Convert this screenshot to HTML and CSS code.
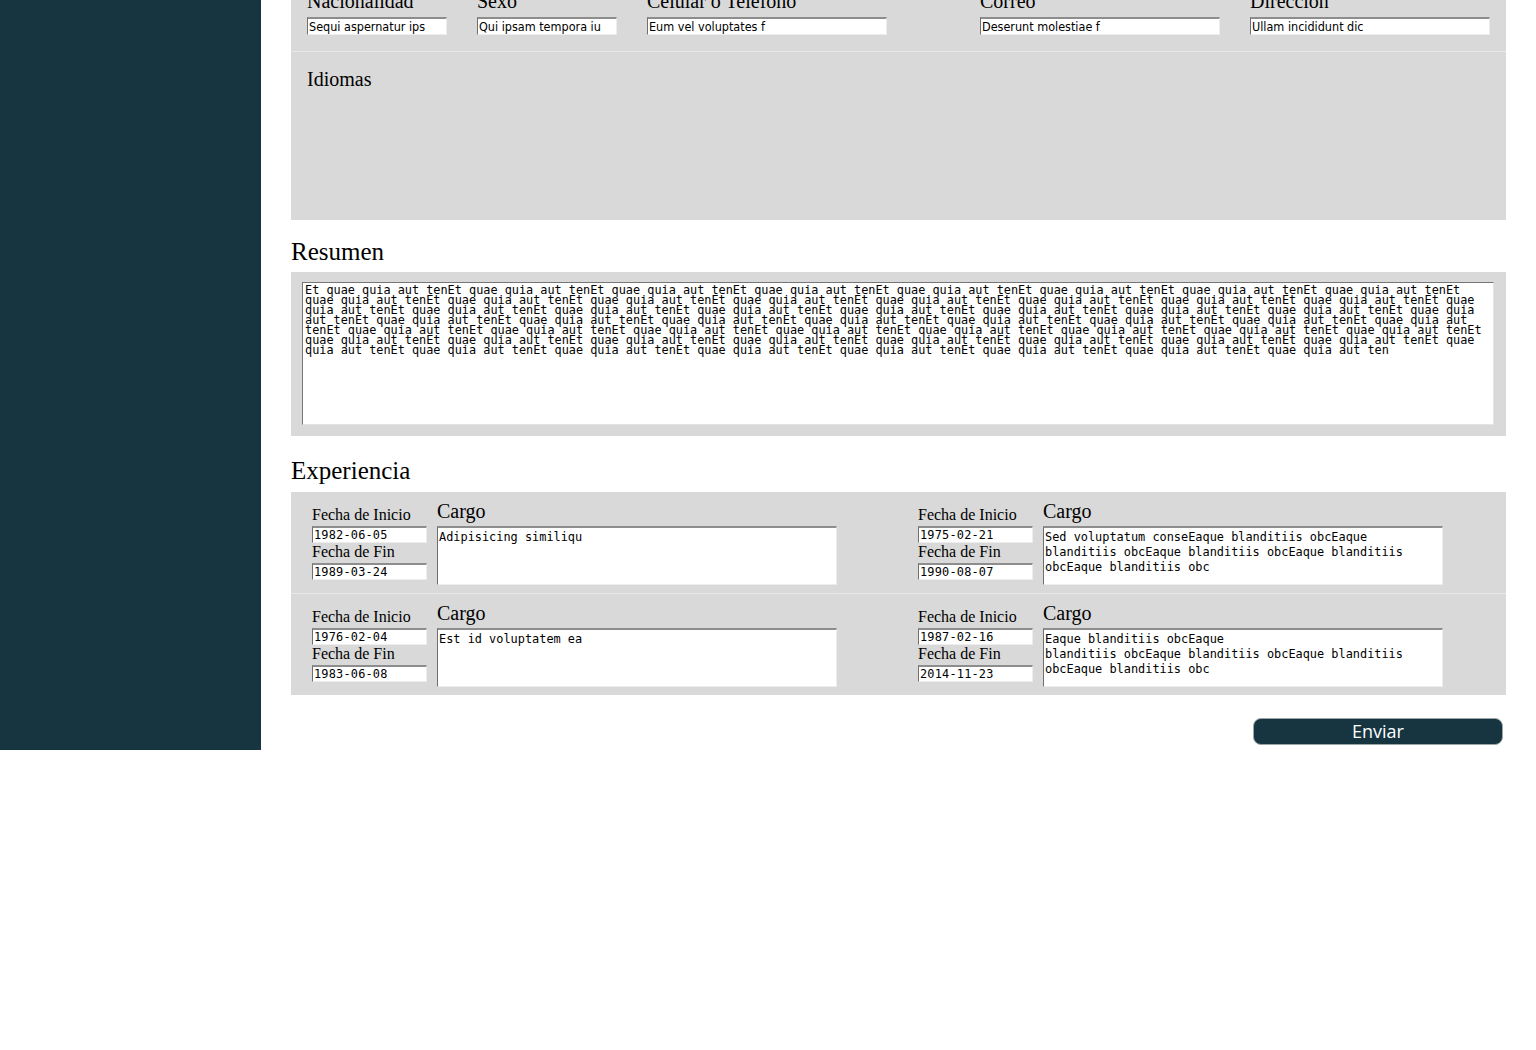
FILE: index.html
```html
<!DOCTYPE html>
<html lang="es">
<head>
<meta charset="utf-8">
<title>Formulario</title>
<link rel="stylesheet" href="styles.css">
</head>
<body>
<div class="layout">
  <aside class="sidebar"></aside>
  <main class="main">
    <section class="panel datos">
      <div class="field-row">
        <div class="group">
          <div class="field"><label class="lbl">Nacionalidad</label><input class="inp w140" type="text" value="Sequi aspernatur ips"></div>
          <div class="field"><label class="lbl">Sexo</label><input class="inp w140" type="text" value="Qui ipsam tempora iu"></div>
          <div class="field"><label class="lbl">Celular o Teléfono</label><input class="inp w240" type="text" value="Eum vel voluptates f"></div>
        </div>
        <div class="group">
          <div class="field"><label class="lbl">Correo</label><input class="inp w240" type="text" value="Deserunt molestiae f"></div>
          <div class="field"><label class="lbl">Dirección</label><input class="inp w240" type="text" value="Ullam incididunt dic"></div>
        </div>
      </div>
      <div class="idiomas">
        <label class="lbl">Idiomas</label>
      </div>
    </section>

    <h2 class="section-title">Resumen</h2>
    <section class="panel resumen">
      <textarea class="resumen-text">Et quae quia aut tenEt quae quia aut tenEt quae quia aut tenEt quae quia aut tenEt quae quia aut tenEt quae quia aut tenEt quae quia aut tenEt quae quia aut tenEt quae quia aut tenEt quae quia aut tenEt quae quia aut tenEt quae quia aut tenEt quae quia aut tenEt quae quia aut tenEt quae quia aut tenEt quae quia aut tenEt quae quia aut tenEt quae quia aut tenEt quae quia aut tenEt quae quia aut tenEt quae quia aut tenEt quae quia aut tenEt quae quia aut tenEt quae quia aut tenEt quae quia aut tenEt quae quia aut tenEt quae quia aut tenEt quae quia aut tenEt quae quia aut tenEt quae quia aut tenEt quae quia aut tenEt quae quia aut tenEt quae quia aut tenEt quae quia aut tenEt quae quia aut tenEt quae quia aut tenEt quae quia aut tenEt quae quia aut tenEt quae quia aut tenEt quae quia aut tenEt quae quia aut tenEt quae quia aut tenEt quae quia aut tenEt quae quia aut tenEt quae quia aut tenEt quae quia aut tenEt quae quia aut tenEt quae quia aut tenEt quae quia aut tenEt quae quia aut tenEt quae quia aut tenEt quae quia aut tenEt quae quia aut tenEt quae quia aut tenEt quae quia aut tenEt quae quia aut tenEt quae quia aut ten</textarea>
    </section>

    <h2 class="section-title exp-title">Experiencia</h2>
    <section class="panel experiencia">
      <div class="exp-row">
        <div class="exp-item">
          <div class="dates">
            <label class="lbl-sm">Fecha de Inicio</label>
            <input class="inp-date" type="text" value="1982-06-05">
            <label class="lbl-sm">Fecha de Fin</label>
            <input class="inp-date" type="text" value="1989-03-24">
          </div>
          <div class="cargo">
            <label class="lbl">Cargo</label>
            <textarea class="cargo-text">Adipisicing similiqu</textarea>
          </div>
        </div>
        <div class="exp-item">
          <div class="dates">
            <label class="lbl-sm">Fecha de Inicio</label>
            <input class="inp-date" type="text" value="1975-02-21">
            <label class="lbl-sm">Fecha de Fin</label>
            <input class="inp-date" type="text" value="1990-08-07">
          </div>
          <div class="cargo">
            <label class="lbl">Cargo</label>
            <textarea class="cargo-text">Sed voluptatum conseEaque blanditiis obcEaque blanditiis obcEaque blanditiis obcEaque blanditiis obcEaque blanditiis obc</textarea>
          </div>
        </div>
      </div>
      <div class="exp-row">
        <div class="exp-item">
          <div class="dates">
            <label class="lbl-sm">Fecha de Inicio</label>
            <input class="inp-date" type="text" value="1976-02-04">
            <label class="lbl-sm">Fecha de Fin</label>
            <input class="inp-date" type="text" value="1983-06-08">
          </div>
          <div class="cargo">
            <label class="lbl">Cargo</label>
            <textarea class="cargo-text">Est id voluptatem ea</textarea>
          </div>
        </div>
        <div class="exp-item">
          <div class="dates">
            <label class="lbl-sm">Fecha de Inicio</label>
            <input class="inp-date" type="text" value="1987-02-16">
            <label class="lbl-sm">Fecha de Fin</label>
            <input class="inp-date" type="text" value="2014-11-23">
          </div>
          <div class="cargo">
            <label class="lbl">Cargo</label>
            <textarea class="cargo-text">Eaque blanditiis obcEaque
blanditiis obcEaque blanditiis obcEaque blanditiis
obcEaque blanditiis obc</textarea>
          </div>
        </div>
      </div>
    </section>

    <div class="actions">
      <button class="btn" type="button">Enviar</button>
    </div>
  </main>
</div>
</body>
</html>
```

FILE: styles.css
```css
* { box-sizing: border-box; }

html, body {
  margin: 0;
  padding: 0;
  background: #ffffff;
}

body {
  font-family: "Liberation Serif", "Times New Roman", serif;
  color: #000;
  overflow: hidden;
}

.layout {
  display: flex;
  align-items: flex-start;
}

.sidebar {
  width: 261px;
  height: 750px;
  flex: none;
  background: #163540;
}

.main {
  width: 1215px;
  margin-left: 30px;
  flex: none;
}

.panel {
  background: #d9d9d9;
}

.datos {
  margin-top: -10px;
}

.field-row {
  display: flex;
  justify-content: space-between;
  padding: 0 16px 16px 16px;
  border-bottom: 1px solid #e9e9e9;
}

.group {
  display: flex;
  gap: 30px;
}

.field {
  display: flex;
  flex-direction: column;
}

.lbl {
  display: block;
  font-family: "Liberation Serif", "Times New Roman", serif;
  font-size: 20px;
  line-height: 23px;
  color: #000;
}

.field .lbl {
  margin-bottom: 4px;
}

.inp {
  height: 18px;
  padding: 0 1px;
  font-family: "DejaVu Sans Condensed", "DejaVu Sans", sans-serif;
  font-stretch: condensed;
  font-size: 12.5px;
  color: #000;
  background: #fff;
  border-style: solid;
  border-width: 2px 1px 1px 1px;
  border-color: #8d8d8d #ededed #ededed #6f6f6f;
  outline: none;
}

.w140 { width: 140px; }
.w240 { width: 240px; }

.idiomas {
  height: 168px;
  padding: 16px 16px;
}

.section-title {
  margin: 17px 0 6px 0;
  font-family: "Liberation Serif", "Times New Roman", serif;
  font-weight: normal;
  font-size: 25px;
  line-height: 29px;
}

.exp-title {
  margin-top: 20px;
  margin-bottom: 7px;
}

.resumen {
  padding: 10px 12px 11px 11px;
}

.resumen-text {
  display: block;
  width: 1192px;
  height: 143px;
  margin: 0;
  padding: 2px;
  resize: none;
  font-family: "DejaVu Sans Mono", monospace;
  font-size: 11.85px;
  line-height: 10px;
  color: #000;
  background: #fff;
  border-style: solid;
  border-width: 1px;
  border-color: #767676 #e4e4e4 #e4e4e4 #767676;
  overflow: hidden;
  outline: none;
}

.exp-row {
  display: grid;
  grid-template-columns: 606px 1fr;
}

.exp-row + .exp-row {
  border-top: 1px solid #e9e9e9;
}

.exp-item {
  display: flex;
  align-items: flex-start;
  gap: 10px;
  padding: 8px 0 8px 21px;
}

.dates {
  width: 115px;
  display: flex;
  flex-direction: column;
  padding-top: 6px;
}

.lbl-sm {
  display: block;
  font-family: "Liberation Serif", "Times New Roman", serif;
  font-size: 16px;
  line-height: 18px;
}

.inp-date {
  width: 115px;
  height: 17px;
  margin-top: 2px;
  padding: 0 1px;
  font-family: "DejaVu Sans Mono", monospace;
  font-size: 11.9px;
  letter-spacing: 0.2px;
  color: #000;
  background: #fff;
  border-style: solid;
  border-width: 2px 1px 1px 1px;
  border-color: #8d8d8d #ededed #ededed #6f6f6f;
  outline: none;
}

.cargo {
  display: flex;
  flex-direction: column;
}

.cargo-text {
  display: block;
  width: 400px;
  height: 59px;
  margin: 3px 0 0 0;
  padding: 2px 14px 2px 1px;
  resize: none;
  font-family: "DejaVu Sans Mono", monospace;
  font-size: 11.9px;
  line-height: 15px;
  color: #000;
  background: #fff;
  border-style: solid;
  border-width: 2px 1px 1px 1px;
  border-color: #8d8d8d #ededed #ededed #6f6f6f;
  overflow: hidden;
  outline: none;
}

.actions {
  display: flex;
  justify-content: flex-end;
  padding: 23px 3px 0 0;
}

.btn {
  width: 250px;
  height: 27px;
  padding: 0;
  background: #163540;
  color: #fff;
  border: 1px solid #9aa5a8;
  border-radius: 8px;
  font-family: "Open Sans", "Noto Sans", sans-serif;
  font-size: 18px;
  line-height: 25px;
}
```
